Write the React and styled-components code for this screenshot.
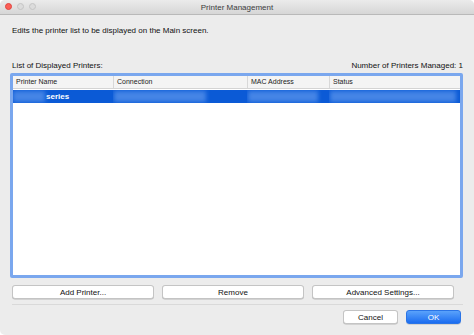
import React from 'react';
import styled, { createGlobalStyle } from 'styled-components';

const Global = createGlobalStyle`
  html, body { margin: 0; padding: 0; background: #ffffff; }
  body { font-family: "Liberation Sans", Arial, sans-serif; }
`

const Window = styled.div`
  width: 474px;
  height: 335px;
  background: #ececec;
  border-radius: 5px;
  overflow: hidden;
  display: flex;
  flex-direction: column;
  box-sizing: border-box;
`

const TitleBar = styled.div`
  height: 14px;
  border-bottom: 1px solid #b9b9b9;
  background: linear-gradient(#ebebeb, #d6d6d6);
  position: relative;
  display: flex;
  align-items: center;
  justify-content: center;
  font-size: 8px;
  color: #3c3c3c;
`

const Lights = styled.div`
  position: absolute;
  left: 5px;
  top: 3px;
  display: flex;
  gap: 5px;
`

const Light = styled.span`
  width: 7px;
  height: 7px;
  border-radius: 50%;
  box-sizing: border-box;
  background: ${p => p.$red ? '#fc5f57' : '#dcdcdc'};
  border: 0.5px solid ${p => p.$red ? '#de4540' : '#c4c4c4'};
`

const Body = styled.div`
  display: flex;
  flex-direction: column;
  padding: 0 11px 0 10px;
`

const Text = styled.div`
  font-size: 8px;
  line-height: 12px;
  color: #111;
  padding-left: 2px;
`

const Description = styled(Text)`
  margin-top: 10px;
`

const ListHeader = styled(Text)`
  margin-top: 23px;
  display: flex;
  justify-content: space-between;
`

const Table = styled.div`
  margin-top: 1px;
  height: 205px;
  box-sizing: border-box;
  border: 3px solid #7aa7ee;
  border-radius: 2px;
  background: #ffffff;
  display: flex;
  flex-direction: column;
`

const HeadRow = styled.div`
  display: grid;
  grid-template-columns: 100px 134px 82px 1fr;
  height: 12px;
  background: #f4f4f4;
  border-bottom: 1px solid #d4d4d4;
`

const HeadCell = styled.div`
  font-size: 7px;
  line-height: 12px;
  color: #222;
  padding-left: 3px;
  border-left: ${p => p.$first ? 'none' : '1px solid #d8d8d8'};
`

const SelRow = styled.div`
  margin-top: 1px;
  height: 13px;
  background: #0b5ad6;
  display: grid;
  grid-template-columns: 100px 134px 82px 1fr;
`

const Cell = styled.div`
  display: flex;
  align-items: center;
  overflow: hidden;
`

const Blur = styled.span`
  width: ${p => p.$w}px;
  height: 11px;
  margin-left: ${p => p.$ml || 0}px;
  background: #4585e6;
  filter: blur(2px);
  flex-shrink: 0;
`

const Sel = styled.span`
  font-size: 8px;
  font-weight: bold;
  color: #fff;
  margin-left: 1px;
`

const ButtonRow = styled.div`
  margin-top: 7px;
  padding: 0 9px 0 2px;
  display: grid;
  grid-template-columns: repeat(3, 1fr);
  gap: 8px;
`

const Button = styled.button`
  height: 14px;
  padding: 0;
  box-sizing: border-box;
  border: 1px solid #c4c4c4;
  border-radius: 3px;
  background: #ffffff;
  font-family: "Liberation Sans", Arial, sans-serif;
  font-size: 8px;
  color: #111;
  box-shadow: 0 0.5px 0 #b8b8b8;
`

const Separator = styled.div`
  margin: 5px 0 0 2px;
  height: 1px;
  background: #d9d9d9;
`

const Footer = styled.div`
  margin-top: 5px;
  display: flex;
  justify-content: flex-end;
  gap: 8px;
  padding-right: 2px;
`

const FooterButton = styled(Button)`
  width: 55px;
  ${p => p.$primary && `
    border: 1px solid #2a74e6;
    background: linear-gradient(#5aa2fb, #1b6cf0);
    color: #fff;
  `}
`

export default function App() {
  return (
    <Window>
      <Global />
      <TitleBar>
        <Lights>
          <Light $red />
          <Light />
          <Light />
        </Lights>
        Printer Management
      </TitleBar>
      <Body>
        <Description>Edits the printer list to be displayed on the Main screen.</Description>
        <ListHeader>
          <span>List of Displayed Printers:</span>
          <span>Number of Printers Managed: 1</span>
        </ListHeader>
        <Table>
          <HeadRow>
            <HeadCell $first>Printer Name</HeadCell>
            <HeadCell>Connection</HeadCell>
            <HeadCell>MAC Address</HeadCell>
            <HeadCell>Status</HeadCell>
          </HeadRow>
          <SelRow>
            <Cell>
              <Blur $w={32} />
              <Sel>series</Sel>
            </Cell>
            <Cell><Blur $w={92} $ml={1} /></Cell>
            <Cell><Blur $w={70} $ml={1} /></Cell>
            <Cell><Blur $w={126} $ml={1} /></Cell>
          </SelRow>
        </Table>
        <ButtonRow>
          <Button>Add Printer...</Button>
          <Button>Remove</Button>
          <Button>Advanced Settings...</Button>
        </ButtonRow>
        <Separator />
        <Footer>
          <FooterButton>Cancel</FooterButton>
          <FooterButton $primary>OK</FooterButton>
        </Footer>
      </Body>
    </Window>
  );
}
